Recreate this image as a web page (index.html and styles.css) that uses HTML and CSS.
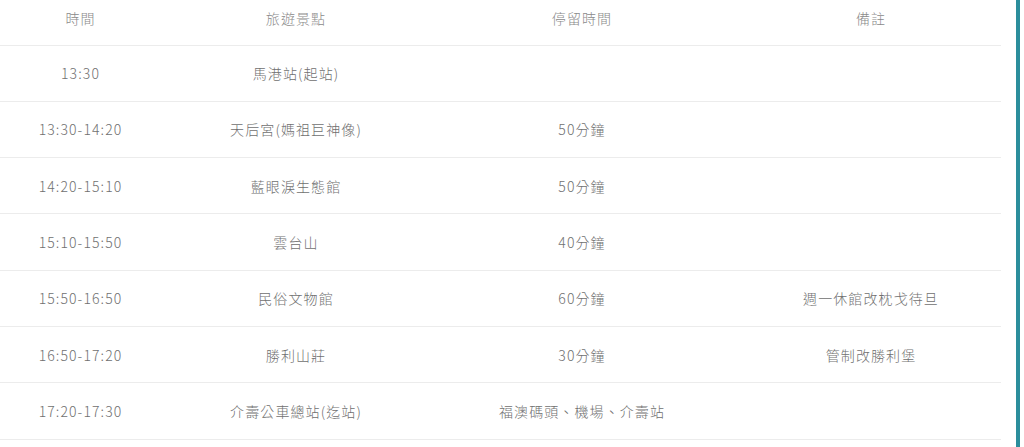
FILE: index.html
```html
<!DOCTYPE html>
<html lang="zh-Hant">
<head>
<meta charset="utf-8">
<link rel="stylesheet" href="styles.css">
</head>
<body>
<div class="page">
  <div class="content">
    <table class="schedule">
      <colgroup>
        <col class="c1"><col class="c2"><col class="c3"><col class="c4">
      </colgroup>
      <thead>
        <tr><th>時間</th><th>旅遊景點</th><th>停留時間</th><th class="note">備註</th></tr>
      </thead>
      <tbody>
        <tr><td>13:30</td><td>馬港站(起站)</td><td></td><td class="note"></td></tr>
        <tr><td>13:30-14:20</td><td>天后宮(媽祖巨神像)</td><td>50分鐘</td><td class="note"></td></tr>
        <tr><td>14:20-15:10</td><td>藍眼淚生態館</td><td>50分鐘</td><td class="note"></td></tr>
        <tr><td>15:10-15:50</td><td>雲台山</td><td>40分鐘</td><td class="note"></td></tr>
        <tr><td>15:50-16:50</td><td>民俗文物館</td><td>60分鐘</td><td class="note">週一休館改枕戈待旦</td></tr>
        <tr><td>16:50-17:20</td><td>勝利山莊</td><td>30分鐘</td><td class="note">管制改勝利堡</td></tr>
        <tr><td>17:20-17:30</td><td>介壽公車總站(迄站)</td><td>福澳碼頭、機場、介壽站</td><td class="note"></td></tr>
      </tbody>
    </table>
  </div>
  <div class="side-bar"></div>
</div>
</body>
</html>
```

FILE: styles.css
```css
html, body {
  margin: 0;
  padding: 0;
  background: #ffffff;
}
body {
  font-family: "Noto Sans CJK TC", "Noto Sans", sans-serif;
  font-size: 14px;
  font-weight: 300;
  color: #707070;
  overflow: hidden;
}
.page {
  display: flex;
  align-items: stretch;
  height: 447px;
}
.content {
  width: 1001px;
  flex: none;
}
.side-bar {
  width: 4px;
  margin-left: 15px;
  background: #2b8e9c;
  flex: none;
}
.schedule {
  width: 1001px;
  border-collapse: collapse;
  table-layout: fixed;
}
.schedule col.c1 { width: 161px; }
.schedule col.c2 { width: 270px; }
.schedule col.c3 { width: 302px; }
.schedule col.c4 { width: 268px; }
.schedule th,
.schedule td {
  text-align: center;
  border-bottom: 1px solid #ececec;
  padding: 0;
  letter-spacing: 1.1px;
}
.schedule .note {
  padding-left: 8px;
}
.schedule th {
  font-weight: 300;
  color: #8a8a8a;
  height: 45px;
  line-height: 24px;
  vertical-align: top;
  padding-top: 6px;
  box-sizing: border-box;
}
.schedule td {
  height: 55.3px;
  line-height: 24px;
  vertical-align: middle;
}
```
